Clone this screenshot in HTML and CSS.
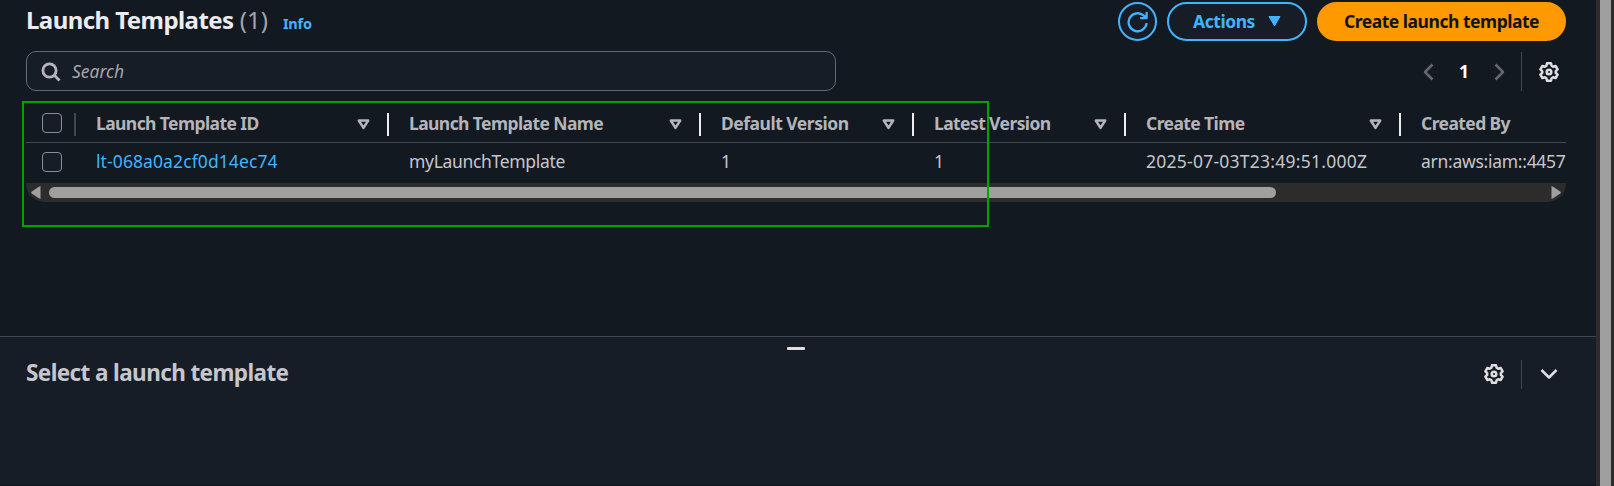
FILE: index.html
```
<!DOCTYPE html>
<html lang="en">
<head>
<meta charset="utf-8">
<title>Launch Templates</title>
<link rel="stylesheet" href="styles.css">
</head>
<body>
<svg class="defs" width="0" height="0">
  <symbol id="gear" viewBox="0 0 20 20">
    <path d="M8 1.3h4l.6 2.5 1.5.9 2.5-.8 2 3.4-1.8 1.8v1.8l1.8 1.8-2 3.4-2.5-.8-1.5.9-.6 2.5H8l-.6-2.5-1.5-.9-2.5.8-2-3.4 1.8-1.8V9.100L1.400 7.300l2-3.400 2.500.8 1.500-.9z"/>
    <circle cx="10" cy="10" r="2.300"/>
  </symbol>
  <symbol id="sort" viewBox="0 0 13 11"><path d="M1.800 1.500h9.400L6.500 8.900z"/></symbol>
</svg>
<div class="app">
  <div class="content">
    <main class="list">
      <header class="heading">
        <h1 class="title"><span class="title-text">Launch Templates</span> <span class="count">(1)</span></h1>
        <a class="info">Info</a>
        <div class="buttons">
          <button class="btn refresh" aria-label="Refresh">
            <svg class="icon" width="22" height="22" viewBox="0 0 22 22"><path d="M19.600 12A9 9 0 1 1 16.800 4.700L19.500 6.800M19.600 1v6.100h-6.400"/></svg>
          </button>
          <button class="btn actions"><span class="label">Actions</span>
            <svg width="13" height="11" viewBox="0 0 13 11"><path d="M1 .5h11L6.500 10z" fill="#42b4ff" stroke="#42b4ff" stroke-linejoin="round"/></svg>
          </button>
          <button class="btn primary"><span class="label">Create launch template</span></button>
        </div>
      </header>
      <div class="tools">
        <div class="search">
          <svg class="icon" width="20" height="20" viewBox="0 0 20 20"><circle cx="8.500" cy="8.500" r="6.600"/><path d="M13.300 13.300l5.200 5.200"/></svg>
          <span class="placeholder">Search</span>
        </div>
        <div class="pager">
          <svg class="icon dim" width="11" height="18" viewBox="0 0 11 18"><path d="M9.500 1.500L2 9l7.500 7.500"/></svg>
          <span class="page">1</span>
          <svg class="icon dim" width="11" height="18" viewBox="0 0 11 18"><path d="M1.500 1.500L9 9l-7.500 7.500"/></svg>
          <span class="rule"></span>
          <svg class="icon" width="20" height="20"><use href="#gear"/></svg>
        </div>
      </div>
      <div class="table">
        <div class="row head">
          <div class="cell check"><span class="box"></span></div>
          <div class="cell"><span>Launch Template ID</span><svg class="icon sort" width="13" height="11"><use href="#sort"/></svg></div>
          <div class="cell"><span>Launch Template Name</span><svg class="icon sort" width="13" height="11"><use href="#sort"/></svg></div>
          <div class="cell"><span class="wide">Default Version</span><svg class="icon sort" width="13" height="11"><use href="#sort"/></svg></div>
          <div class="cell"><span>Latest Version</span><svg class="icon sort" width="13" height="11"><use href="#sort"/></svg></div>
          <div class="cell"><span>Create Time</span><svg class="icon sort" width="13" height="11"><use href="#sort"/></svg></div>
          <div class="cell last"><span>Created By</span></div>
        </div>
        <div class="row data">
          <div class="cell check"><span class="box"></span></div>
          <div class="cell"><a class="link">lt-068a0a2cf0d14ec74</a></div>
          <div class="cell"><span class="name">myLaunchTemplate</span></div>
          <div class="cell">1</div>
          <div class="cell">1</div>
          <div class="cell"><span class="time">2025-07-03T23:49:51.000Z</span></div>
          <div class="cell"><span class="arn">arn:aws:iam::4457</span></div>
        </div>
        <div class="hscroll">
          <svg width="10" height="13" viewBox="0 0 10 13"><path d="M9.500 0v13L7.500 12 .8 7.500Q-.2 6.500.8 5.500L7.500 1z" fill="#9f9f9f"/></svg>
          <div class="track"><div class="thumb"></div></div>
          <svg width="10" height="13" viewBox="0 0 10 13"><path d="M.5 0v13L2.500 12 9.200 7.500Q10.200 6.500 9.200 5.500L2.500 1z" fill="#9f9f9f"/></svg>
        </div>
      </div>
    </main>
    <section class="panel">
      <div class="grip"></div>
      <div class="panel-head">
        <h2 class="panel-title">Select a launch template</h2>
        <svg class="icon" width="20" height="20"><use href="#gear"/></svg>
        <span class="rule short"></span>
        <svg class="icon" width="18" height="12" viewBox="0 0 18 12"><path d="M1.500 2L9 9.500 16.500 2"/></svg>
      </div>
    </section>
  </div>
  <div class="vscroll"></div>
  <div class="highlight"></div>
</div>
</body>
</html>
```
FILE: styles.css
```
* { box-sizing: border-box; }
body { margin: 0; background: #131920; font-family: "Noto Sans", "Open Sans", sans-serif; font-size: 17.5px; line-height: 24px; color: #c6c6cd; overflow: hidden; }
.defs { position: absolute; }
.app { display: flex; height: 486px; position: relative; }
.content { width: 1596px; display: flex; flex-direction: column; }
.list { height: 336px; padding: 2px 30px 0 26px; }
.heading { display: flex; height: 39px; }
.title { margin: 0; font-size: 24px; line-height: 36px; white-space: nowrap; color: #ebebf0; }
.title-text { letter-spacing: -0.57px; }
.count { font-weight: 400; color: #a4a4ad; }
.info { margin-left: 15px; font-size: 14.5px; font-weight: 700; line-height: 43px; letter-spacing: -0.2px; color: #42b4ff; }
.buttons { display: flex; gap: 10px; margin-left: auto; }
.btn { display: flex; align-items: center; justify-content: center; height: 39px; padding: 0; border: 2px solid #42b4ff; border-radius: 20px; background: #161d26; color: #42b4ff; font: 700 17.5px/24px "Noto Sans", "Open Sans", sans-serif; white-space: nowrap; }
.label { margin-top: -2px; letter-spacing: -0.47px; }
.refresh { width: 39px; }
.refresh .icon { stroke: #42b4ff; stroke-width: 2.3; }
.actions { width: 140px; gap: 13px; }
.primary { width: 249px; background: #ff9900; border-color: #ff9900; color: #0f141a; }
.icon { fill: none; stroke: #dedee3; stroke-width: 2.5; stroke-linejoin: round; flex: none; }
.tools { display: flex; justify-content: space-between; margin-top: 10px; height: 40px; }
.search { display: flex; align-items: center; width: 810px; padding-left: 14px; border: 1px solid #656871; border-radius: 10px; background: #161d26; }
.search .icon { stroke: #b4b4bb; stroke-width: 2.8; margin-top: 1px; }
.placeholder { margin-left: 11px; margin-top: -1px; font-style: italic; color: #a4a4ad; }
.pager { display: flex; align-items: center; padding: 1px 7px 0 0; }
.icon.dim { stroke: #656871; }
.page { width: 60px; text-align: center; margin-top: -2px; font-weight: 700; color: #fff; }
.rule { width: 1px; height: 39px; margin: 0 17px 0 16px; background: #424650; }
.table { margin-top: 12px; }
.row { display: grid; grid-template-columns: 50px 313px 312px 213px 212px 275px 165px; white-space: nowrap; }
.head { height: 40px; padding-top: 10px; border-bottom: 1px solid #424650; font-weight: 700; letter-spacing: -0.59px; color: #b4b4bb; }
.wide { letter-spacing: -0.49px; }
.cell { display: flex; padding-left: 20px; }
.head .cell { height: 23px; line-height: 21px; justify-content: space-between; border-right: 2px solid #ebebf0; padding-right: 17px; }
.head .cell.check { border-color: #424650; padding-right: 0; }
.head .last { border: 0; }
.sort { margin-top: 6px; stroke: #b4b4bb; }
.cell.check { padding-left: 16px; }
.box { width: 20px; height: 20px; border: 1px solid #8c8c94; border-radius: 4px; background: #161d26; flex: none; }
.data { height: 40px; padding-top: 7px; line-height: 24px; }
.data .box { margin-top: 2px; }
.link { color: #42b4ff; letter-spacing: 0.1px; }
.name { letter-spacing: -0.32px; }
.time { letter-spacing: 0.25px; }
.arn { letter-spacing: -0.28px; }
.data .cell:nth-child(n+2) { margin-top: -1px; }
.hscroll { display: flex; align-items: center; height: 19px; padding: 0 5px; border-radius: 0 0 19px 19px; background: #2c2c2c; }
.track { flex: 1; padding-left: 8px; }
.thumb { width: 1227px; height: 11px; border-radius: 6px; background: #9f9f9f; }
.panel { flex: 1; border-top: 1px solid #424650; border-bottom: 1px solid #0f141a; background: #161d26; }
.grip { width: 18px; height: 3px; margin: 10px 0 0 787px; border-radius: 1px; background: #dedee3; }
.panel-head { display: flex; align-items: center; height: 30px; margin-top: 9px; padding: 0 38px 0 26px; }
.panel-title { margin: -2px auto 0 0; font-size: 22.5px; line-height: 30px; letter-spacing: -0.6px; color: #c6c6cd; white-space: nowrap; }
.rule.short { height: 29px; margin: 0 18px 0 17px; }
.vscroll { width: 18px; border: solid #2c2c2c; border-width: 0 3px 0 4px; background: #9f9f9f; }
.highlight { position: absolute; left: 22px; top: 101px; width: 967px; height: 126px; border: 2px solid #00a400; }
```
